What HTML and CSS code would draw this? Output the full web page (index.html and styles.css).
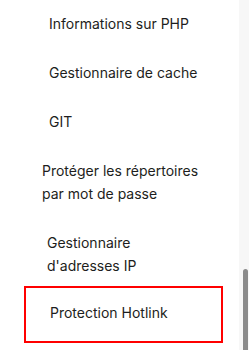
FILE: index.html
```html
<!DOCTYPE html>
<html lang="fr">
<head>
  <meta charset="UTF-8">
  <meta name="viewport" content="width=device-width, initial-scale=1.0">
  <title>Menu avancé</title>
  <link rel="stylesheet" href="styles.css">
</head>
<body>
  <div class="page">
    <!-- Sidebar submenu -->
    <ul class="menu">
      <li class="menu-item first">Informations sur PHP</li>
      <li class="menu-item">Gestionnaire de cache</li>
      <li class="menu-item">GIT</li>
      <li class="menu-item shift-lg">Protéger les répertoires<br>par mot de passe</li>
      <li class="menu-item shift-sm">Gestionnaire<br>d'adresses IP</li>
      <li class="menu-item highlighted">Protection Hotlink</li>
    </ul>

    <!-- Scrollbar -->
    <div class="scroll-track">
      <div class="scroll-thumb"></div>
    </div>
  </div>
</body>
</html>
```

FILE: styles.css
```css
/* Reset */
* {
  margin: 0;
  padding: 0;
  box-sizing: border-box;
}

body {
  font-family: Inter, "Noto Sans", Arial, sans-serif;
  background: #ffffff;
  color: #1d1e20;
  overflow: hidden;
}

.page {
  display: flex;
  height: 350px;
}

/* Menu list */
.menu {
  flex: 1;
  list-style: none;
}

.menu-item {
  font-size: 14px;
  line-height: 23px;
  padding: 13px 0 13px 49px;
  white-space: nowrap;
}

.menu-item.first {
  padding-top: 12px;
}

.menu-item.shift-lg {
  padding-left: 42px;
}

.menu-item.shift-sm {
  padding-left: 47px;
}

/* Selected item */
.menu-item.highlighted {
  margin: -4px 16px 0 24px;
  padding: 13px 0 17px 24px;
  border: 2px solid #ff0000;
}

/* Scrollbar */
.scroll-track {
  width: 10px;
  background: #f7f7f7;
  display: flex;
  flex-direction: column;
}

.scroll-thumb {
  margin: 269px 1px 0 4px;
  flex: 1;
  background: #8b8b8b;
  border-radius: 3px 3px 0 0;
}
```
